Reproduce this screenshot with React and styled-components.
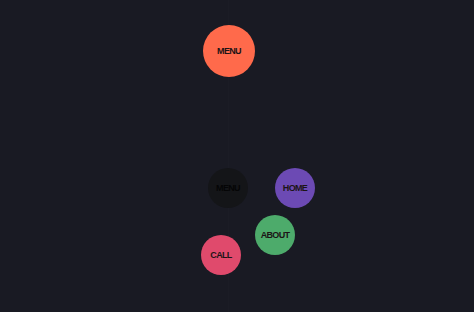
import React from "react";
import styled, { createGlobalStyle } from "styled-components";

const Global = createGlobalStyle`
  html, body { margin: 0; padding: 0; background: #191a23; }
  body { font-family: "Liberation Sans", Arial, sans-serif; }
`;

const Page = styled.div`
  position: relative;
  width: 474px;
  height: 312px;
  box-sizing: border-box;
  padding: 25px 16px 0 0;
  display: flex;
  flex-direction: column;
  align-items: center;
  overflow: hidden;
`;

const Guide = styled.div`
  position: absolute;
  left: 228px;
  top: 0;
  width: 1px;
  height: 312px;
  background: rgba(255, 255, 255, 0.012);
`;

const Circle = styled.button`
  width: ${(p) => p.$size}px;
  height: ${(p) => p.$size}px;
  border-radius: 50%;
  border: none;
  padding: 0;
  background: ${(p) => p.$bg};
  color: ${(p) => p.$fg || "#1c1416"};
  font-family: "Liberation Sans", Arial, sans-serif;
  font-weight: 700;
  font-size: 9px;
  letter-spacing: -0.65px;
  display: flex;
  align-items: center;
  justify-content: center;
  position: relative;
  z-index: 1;
`;

const Cluster = styled.div`
  position: relative;
  margin-top: 91px;
  margin-left: -2px;
  width: 40px;
  height: 40px;
`;

const Item = styled(Circle)`
  position: absolute;
  left: ${(p) => p.$x}px;
  top: ${(p) => p.$y}px;
`;

const items = [
  { label: "HOME", x: 67, y: 0, bg: "#6c4ab4" },
  { label: "ABOUT", x: 47, y: 47, bg: "#4dab6b" },
  { label: "CALL", x: -7, y: 67, bg: "#e04a6c" },
];

export default function App() {
  return (
    <>
      <Global />
      <Page>
        <Guide />
        <Circle $size={52} $bg="#ff6a4b">MENU</Circle>
        <Cluster>
          <Circle $size={40} $bg="#141518" $fg="#050506">MENU</Circle>
          {items.map((it) => (
            <Item key={it.label} $size={40} $x={it.x} $y={it.y} $bg={it.bg}>
              {it.label}
            </Item>
          ))}
        </Cluster>
      </Page>
    </>
  );
}
